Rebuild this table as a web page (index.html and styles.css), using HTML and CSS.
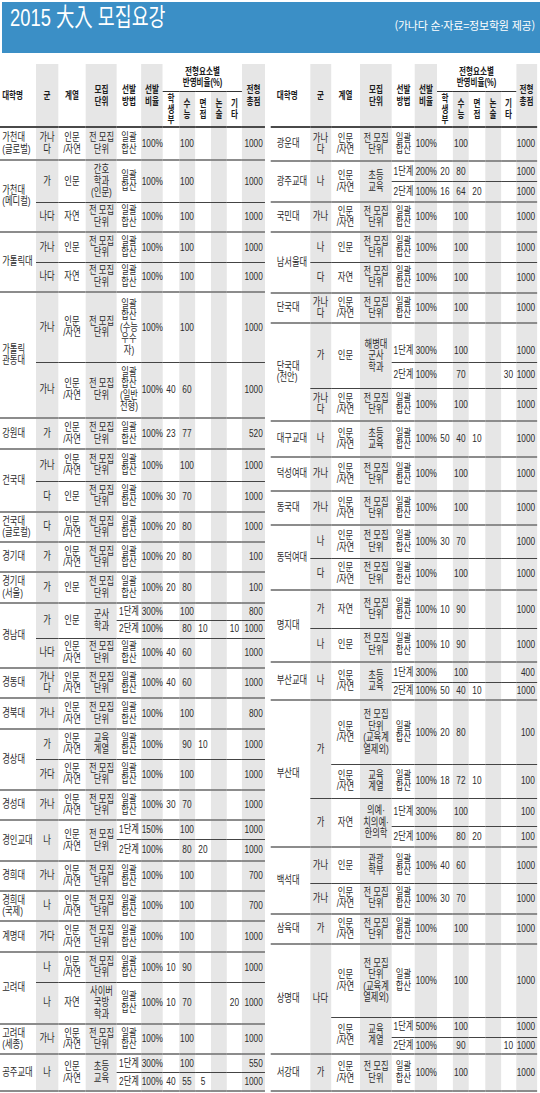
FILE: index.html
```html
<!DOCTYPE html>
<html lang="ko">
<head>
<meta charset="utf-8">
<title>2015 大入 모집요강</title>
<link rel="stylesheet" href="styles.css">
</head>
<body>
<header class="banner">
  <h1 class="title">2015 大入 모집요강</h1>
  <p class="source">(가나다 순·자료=정보학원 제공)</p>
</header>
<main class="board">
<div class="sheets">
  <table class="grid left">
    <colgroup>
      <col class="c1"><col class="c2 sh"><col class="c3"><col class="c4 sh"><col class="c5"><col class="c6 sh"><col class="c7"><col class="c8 sh"><col class="c9"><col class="c10 sh"><col class="c11"><col class="c12 sh">
    </colgroup>
    <thead>
      <tr class="top">
        <th rowspan="2" class="name">대학명</th><th rowspan="2">군</th><th rowspan="2">계열</th><th rowspan="2">모집<br>단위</th><th rowspan="2">선발<br>방법</th><th rowspan="2">선발<br>비율</th><th colspan="5" class="span">전형요소별<br>반영비율(%)</th><th rowspan="2">전형<br>총점</th>
      </tr>
      <tr class="sub">
        <th class="v">학<br>생<br>부</th><th class="v">수<br>능</th><th class="v">면<br>접</th><th class="v">논<br>술</th><th class="v">기<br>타</th>
      </tr>
    </thead>
    <tbody>
      <tr class="u h33"><td>가천대<br>(글로벌)</td><td>가나<br>다</td><td>인문<br>/자연</td><td>전 모집<br>단위</td><td>일괄<br>합산</td><td>100%</td><td></td><td>100</td><td></td><td></td><td></td><td>1000</td></tr>

      <tr class="u h42"><td rowspan="2">가천대<br>(메디컬)</td><td>가</td><td>인문</td><td>간호<br>학과<br>(인문)</td><td>일괄<br>합산</td><td>100%</td><td></td><td>100</td><td></td><td></td><td></td><td>1000</td></tr>
      <tr><td>나다</td><td>자연</td><td>전 모집<br>단위</td><td>일괄<br>합산</td><td>100%</td><td></td><td>100</td><td></td><td></td><td></td><td>1000</td></tr>

      <tr class="u"><td rowspan="2">가톨릭대</td><td>가나</td><td>인문</td><td>전 모집<br>단위</td><td>일괄<br>합산</td><td>100%</td><td></td><td>100</td><td></td><td></td><td></td><td>1000</td></tr>
      <tr><td>나다</td><td>자연</td><td>전 모집<br>단위</td><td>일괄<br>합산</td><td>100%</td><td></td><td>100</td><td></td><td></td><td></td><td>1000</td></tr>

      <tr class="u h70"><td rowspan="2">가톨릭<br>관동대</td><td>가나</td><td>인문<br>/자연</td><td>전 모집<br>단위</td><td>일괄<br>합산<br>(수능<br>우수<br>자)</td><td>100%</td><td></td><td>100</td><td></td><td></td><td></td><td>1000</td></tr>
      <tr class="h56"><td>가나</td><td>인문<br>/자연</td><td>전 모집<br>단위</td><td>일괄<br>합산<br>(일반<br>전형)</td><td>100%</td><td>40</td><td>60</td><td></td><td></td><td></td><td>1000</td></tr>

      <tr class="u h31"><td>강원대</td><td>가</td><td>인문<br>/자연</td><td>전 모집<br>단위</td><td>일괄<br>합산</td><td>100%</td><td>23</td><td>77</td><td></td><td></td><td></td><td>520</td></tr>

      <tr class="u h32"><td rowspan="2">건국대</td><td>가나</td><td>인문<br>/자연</td><td>전 모집<br>단위</td><td>일괄<br>합산</td><td>100%</td><td></td><td>100</td><td></td><td></td><td></td><td>1000</td></tr>
      <tr class="h31"><td>다</td><td>인문</td><td>전 모집<br>단위</td><td>일괄<br>합산</td><td>100%</td><td>30</td><td>70</td><td></td><td></td><td></td><td>1000</td></tr>

      <tr class="u"><td>건국대<br>(글로컬)</td><td>다</td><td>인문<br>/자연</td><td>전 모집<br>단위</td><td>일괄<br>합산</td><td>100%</td><td>20</td><td>80</td><td></td><td></td><td></td><td>1000</td></tr>

      <tr class="u"><td>경기대</td><td>가</td><td>인문<br>/자연</td><td>전 모집<br>단위</td><td>일괄<br>합산</td><td>100%</td><td>20</td><td>80</td><td></td><td></td><td></td><td>100</td></tr>

      <tr class="u h31"><td>경기대<br>(서울)</td><td>가</td><td>인문</td><td>전 모집<br>단위</td><td>일괄<br>합산</td><td>100%</td><td>20</td><td>80</td><td></td><td></td><td></td><td>100</td></tr>

      <tr class="u step h16"><td rowspan="3">경남대</td><td rowspan="2">가</td><td rowspan="2">인문</td><td rowspan="2">군사<br>학과</td><td>1단계</td><td>300%</td><td></td><td>100</td><td></td><td></td><td></td><td>800</td></tr>
      <tr class="step"><td>2단계</td><td>100%</td><td></td><td>80</td><td>10</td><td></td><td>10</td><td>1000</td></tr>
      <tr><td>나다</td><td>인문<br>/자연</td><td>전 모집<br>단위</td><td>일괄<br>합산</td><td>100%</td><td>40</td><td>60</td><td></td><td></td><td></td><td>1000</td></tr>

      <tr class="u"><td>경동대</td><td>가나<br>다</td><td>인문<br>/자연</td><td>전 모집<br>단위</td><td>일괄<br>합산</td><td>100%</td><td>40</td><td>60</td><td></td><td></td><td></td><td>1000</td></tr>

      <tr class="u h31"><td>경북대</td><td>가나</td><td>인문<br>/자연</td><td>전 모집<br>단위</td><td>일괄<br>합산</td><td>100%</td><td></td><td>100</td><td></td><td></td><td></td><td>800</td></tr>

      <tr class="u"><td rowspan="2">경상대</td><td>가</td><td>인문<br>/자연</td><td>교육<br>계열</td><td>일괄<br>합산</td><td>100%</td><td></td><td>90</td><td>10</td><td></td><td></td><td>1000</td></tr>
      <tr class="h31"><td>가다</td><td>인문<br>/자연</td><td>전 모집<br>단위</td><td>일괄<br>합산</td><td>100%</td><td></td><td>100</td><td></td><td></td><td></td><td>1000</td></tr>

      <tr class="u"><td>경성대</td><td>가나</td><td>인문<br>/자연</td><td>전 모집<br>단위</td><td>일괄<br>합산</td><td>100%</td><td>30</td><td>70</td><td></td><td></td><td></td><td>1000</td></tr>

      <tr class="u h19"><td rowspan="2">경인교대</td><td rowspan="2">나</td><td rowspan="2">인문<br>/자연</td><td rowspan="2">전 모집<br>단위</td><td>1단계</td><td>150%</td><td></td><td>100</td><td></td><td></td><td></td><td>1000</td></tr>
      <tr class="h22"><td>2단계</td><td>100%</td><td></td><td>80</td><td>20</td><td></td><td></td><td>1000</td></tr>

      <tr class="u"><td>경희대</td><td>가나</td><td>인문<br>/자연</td><td>전 모집<br>단위</td><td>일괄<br>합산</td><td>100%</td><td></td><td>100</td><td></td><td></td><td></td><td>700</td></tr>

      <tr class="u"><td>경희대<br>(국제)</td><td>나</td><td>인문<br>/자연</td><td>전 모집<br>단위</td><td>일괄<br>합산</td><td>100%</td><td></td><td>100</td><td></td><td></td><td></td><td>700</td></tr>

      <tr class="u h31"><td>계명대</td><td>가다</td><td>인문<br>/자연</td><td>전 모집<br>단위</td><td>일괄<br>합산</td><td>100%</td><td></td><td>100</td><td></td><td></td><td></td><td>1000</td></tr>

      <tr class="u"><td rowspan="2">고려대</td><td>나</td><td>인문<br>/자연</td><td>전 모집<br>단위</td><td>일괄<br>합산</td><td>100%</td><td>10</td><td>90</td><td></td><td></td><td></td><td>1000</td></tr>
      <tr class="h42"><td>나</td><td>자연</td><td>사이버<br>국방<br>학과</td><td>일괄<br>합산</td><td>100%</td><td>10</td><td>70</td><td></td><td></td><td>20</td><td>1000</td></tr>

      <tr class="u"><td>고려대<br>(세종)</td><td>가나</td><td>인문<br>/자연</td><td>전 모집<br>단위</td><td>일괄<br>합산</td><td>100%</td><td></td><td>100</td><td></td><td></td><td></td><td>1000</td></tr>

      <tr class="u step"><td rowspan="2">공주교대</td><td rowspan="2">나</td><td rowspan="2">인문<br>/자연</td><td rowspan="2">초등<br>교육</td><td>1단계</td><td>300%</td><td></td><td>100</td><td></td><td></td><td></td><td>550</td></tr>
      <tr class="h19"><td>2단계</td><td>100%</td><td>40</td><td>55</td><td>5</td><td></td><td></td><td>1000</td></tr>
    </tbody>
  </table>

  <table class="grid right">
    <colgroup>
      <col class="c1"><col class="c2 sh"><col class="c3"><col class="c4 sh"><col class="c5"><col class="c6 sh"><col class="c7"><col class="c8 sh"><col class="c9"><col class="c10 sh"><col class="c11"><col class="c12 sh">
    </colgroup>
    <thead>
      <tr class="top">
        <th rowspan="2" class="name">대학명</th><th rowspan="2">군</th><th rowspan="2">계열</th><th rowspan="2">모집<br>단위</th><th rowspan="2">선발<br>방법</th><th rowspan="2">선발<br>비율</th><th colspan="5" class="span">전형요소별<br>반영비율(%)</th><th rowspan="2">전형<br>총점</th>
      </tr>
      <tr class="sub">
        <th class="v">학<br>생<br>부</th><th class="v">수<br>능</th><th class="v">면<br>접</th><th class="v">논<br>술</th><th class="v">기<br>타</th>
      </tr>
    </thead>
    <tbody>
      <tr class="u h34"><td>광운대</td><td>가나<br>다</td><td>인문<br>/자연</td><td>전 모집<br>단위</td><td>일괄<br>합산</td><td>100%</td><td></td><td>100</td><td></td><td></td><td></td><td>1000</td></tr>

      <tr class="u h20"><td rowspan="2">광주교대</td><td rowspan="2">나</td><td rowspan="2">인문<br>/자연</td><td rowspan="2">초등<br>교육</td><td>1단계</td><td>200%</td><td>20</td><td>80</td><td></td><td></td><td></td><td>1000</td></tr>
      <tr class="h21"><td>2단계</td><td>100%</td><td>16</td><td>64</td><td>20</td><td></td><td></td><td>1000</td></tr>

      <tr class="u"><td>국민대</td><td>가나</td><td>인문<br>/자연</td><td>전 모집<br>단위</td><td>일괄<br>합산</td><td>100%</td><td></td><td>100</td><td></td><td></td><td></td><td>1000</td></tr>

      <tr class="u"><td rowspan="2">남서울대</td><td>나</td><td>인문</td><td>전 모집<br>단위</td><td>일괄<br>합산</td><td>100%</td><td></td><td>100</td><td></td><td></td><td></td><td>1000</td></tr>
      <tr class="h31"><td>다</td><td>자연</td><td>전 모집<br>단위</td><td>일괄<br>합산</td><td>100%</td><td></td><td>100</td><td></td><td></td><td></td><td>1000</td></tr>

      <tr class="u"><td>단국대</td><td>가나<br>다</td><td>인문<br>/자연</td><td>전 모집<br>단위</td><td>일괄<br>합산</td><td>100%</td><td></td><td>100</td><td></td><td></td><td></td><td>1000</td></tr>

      <tr class="u h39 low"><td rowspan="3">단국대<br>(천안)</td><td rowspan="2">가</td><td rowspan="2">인문</td><td rowspan="2">해병대<br>군사<br>학과</td><td>1단계</td><td>300%</td><td></td><td>100</td><td></td><td></td><td></td><td>1000</td></tr>
      <tr class="h26"><td>2단계</td><td>100%</td><td></td><td>70</td><td></td><td></td><td>30</td><td>1000</td></tr>
      <tr class="h33"><td>가나<br>다</td><td>인문<br>/자연</td><td>전 모집<br>단위</td><td>일괄<br>합산</td><td>100%</td><td></td><td>100</td><td></td><td></td><td></td><td>1000</td></tr>

      <tr class="u h36"><td>대구교대</td><td>나</td><td>인문<br>/자연</td><td>초등<br>교육</td><td>일괄<br>합산</td><td>100%</td><td>50</td><td>40</td><td>10</td><td></td><td></td><td>1000</td></tr>

      <tr class="u h34"><td>덕성여대</td><td>가나</td><td>인문<br>/자연</td><td>전 모집<br>단위</td><td>일괄<br>합산</td><td>100%</td><td></td><td>100</td><td></td><td></td><td></td><td>1000</td></tr>

      <tr class="u h34"><td>동국대</td><td>가나</td><td>인문<br>/자연</td><td>전 모집<br>단위</td><td>일괄<br>합산</td><td>100%</td><td></td><td>100</td><td></td><td></td><td></td><td>1000</td></tr>

      <tr class="u h33"><td rowspan="2">동덕여대</td><td>나</td><td>인문<br>/자연</td><td>전 모집<br>단위</td><td>일괄<br>합산</td><td>100%</td><td>30</td><td>70</td><td></td><td></td><td></td><td>1000</td></tr>
      <tr class="h32"><td>다</td><td>인문<br>/자연</td><td>전 모집<br>단위</td><td>일괄<br>합산</td><td>100%</td><td></td><td>100</td><td></td><td></td><td></td><td>1000</td></tr>

      <tr class="u h38"><td rowspan="2">명지대</td><td>가</td><td>자연</td><td>전 모집<br>단위</td><td>일괄<br>합산</td><td>100%</td><td>10</td><td>90</td><td></td><td></td><td></td><td>1000</td></tr>
      <tr class="h34"><td>나</td><td>인문</td><td>전 모집<br>단위</td><td>일괄<br>합산</td><td>100%</td><td>10</td><td>90</td><td></td><td></td><td></td><td>1000</td></tr>

      <tr class="u h20"><td rowspan="2">부산교대</td><td rowspan="2">나</td><td rowspan="2">인문<br>/자연</td><td rowspan="2">초등<br>교육</td><td>1단계</td><td>300%</td><td></td><td>100</td><td></td><td></td><td></td><td>400</td></tr>
      <tr class="step"><td>2단계</td><td>100%</td><td>50</td><td>40</td><td>10</td><td></td><td></td><td>1000</td></tr>

      <tr class="u h64"><td rowspan="4">부산대</td><td rowspan="2">가</td><td>인문<br>/자연</td><td>전 모집<br>단위<br>(교육계<br>열제외)</td><td>일괄<br>합산</td><td>100%</td><td>20</td><td>80</td><td></td><td></td><td></td><td>100</td></tr>
      <tr class="h34"><td>인문<br>/자연</td><td>교육<br>계열</td><td>일괄<br>합산</td><td>100%</td><td>18</td><td>72</td><td>10</td><td></td><td></td><td>100</td></tr>
      <tr class="h28"><td rowspan="2">가</td><td rowspan="2">자연</td><td rowspan="2">의예·<br>치의예·<br>한의학</td><td>1단계</td><td>300%</td><td></td><td>100</td><td></td><td></td><td></td><td>100</td></tr>
      <tr class="h21"><td>2단계</td><td>100%</td><td></td><td>80</td><td>20</td><td></td><td></td><td>100</td></tr>

      <tr class="u h36"><td rowspan="2">백석대</td><td>가나</td><td>인문</td><td>관광<br>학부</td><td>일괄<br>합산</td><td>100%</td><td>40</td><td>60</td><td></td><td></td><td></td><td>1000</td></tr>
      <tr class="h31"><td>가나</td><td>인문<br>/자연</td><td>전 모집<br>단위</td><td>일괄<br>합산</td><td>100%</td><td>30</td><td>70</td><td></td><td></td><td></td><td>1000</td></tr>

      <tr class="u"><td>삼육대</td><td>가</td><td>인문<br>/자연</td><td>전 모집<br>단위</td><td>일괄<br>합산</td><td>100%</td><td></td><td>100</td><td></td><td></td><td></td><td>1000</td></tr>

      <tr class="u h73"><td rowspan="3">상명대</td><td rowspan="3">나다</td><td>인문<br>/자연</td><td>전 모집<br>단위<br>(교육계<br>열제외)</td><td>일괄<br>합산</td><td>100%</td><td></td><td>100</td><td></td><td></td><td></td><td>1000</td></tr>
      <tr class="h20"><td rowspan="2">인문<br>/자연</td><td rowspan="2">교육<br>계열</td><td>1단계</td><td>500%</td><td></td><td>100</td><td></td><td></td><td></td><td>1000</td></tr>
      <tr class="step h16"><td>2단계</td><td>100%</td><td></td><td>90</td><td></td><td></td><td>10</td><td>1000</td></tr>

      <tr class="u h37"><td>서강대</td><td>가</td><td>인문<br>/자연</td><td>전 모집<br>단위</td><td>일괄<br>합산</td><td>100%</td><td></td><td>100</td><td></td><td></td><td></td><td>1000</td></tr>
    </tbody>
  </table>
</div>
</main>
</body>
</html>
```
FILE: styles.css
```css
:root {
  --s: 0.72;
  --blue: #3b8fc6;
  --shade: #e6e6e6;
  --unit-line: #8c8c8c;
  --sub-line: #444444;
}

* { box-sizing: border-box; }

html, body {
  margin: 0;
  padding: 0;
  background: #ffffff;
}

body {
  width: 540px;
  overflow: hidden;
  font-family: "Liberation Sans Narrow", "Liberation Sans", "Noto Sans CJK KR", sans-serif;
  color: #2b2b2b;
}

/* ---------- banner ---------- */
.banner {
  display: flex;
  justify-content: space-between;
  align-items: flex-start;
  height: 51px;
  margin: 2px 0 0 2px;
  padding: 3px 5px 0 8px;
  background: var(--blue);
  color: #ffffff;
}

.title {
  display: inline-block;
  margin: 0;
  font-size: 24.5px;
  line-height: 26px;
  font-weight: 400;
  white-space: nowrap;
  transform: scaleX(0.75);
  transform-origin: left center;
}

.source {
  margin: 13px 0 0;
  font-family: "Noto Sans CJK KR", sans-serif;
  font-size: 11px;
  line-height: 14px;
  letter-spacing: -0.2px;
  white-space: nowrap;
}

/* ---------- tables (condensed type) ---------- */
.board {
  display: block;
  width: 538px;
  margin-top: 11px;
  overflow: hidden;
}

.sheets {
  display: flex;
  align-items: flex-start;
  gap: calc(6px / var(--s));
  width: calc(537px / var(--s));
  transform: scaleX(var(--s));
  transform-origin: left top;
}

.grid {
  flex: none;
  border-collapse: collapse;
  table-layout: fixed;
  font-size: 11.5px;
  line-height: 11.5px;
}

.grid.left { width: calc(265px / var(--s)); }
.grid.right { width: calc(266px / var(--s)); }

.grid col.sh { background: var(--shade); }

.left .c1 { width: calc(36px / var(--s)); }
.left .c2 { width: calc(22px / var(--s)); }
.left .c3 { width: calc(28px / var(--s)); }
.left .c4 { width: calc(31px / var(--s)); }
.left .c5 { width: calc(24px / var(--s)); }
.left .c6 { width: calc(22px / var(--s)); }
.left .c7, .left .c8, .left .c9, .left .c10 { width: calc(16px / var(--s)); }
.left .c11 { width: calc(15px / var(--s)); }
.left .c12 { width: calc(23px / var(--s)); }

.right .c1 { width: calc(39px / var(--s)); }
.right .c2 { width: calc(21px / var(--s)); }
.right .c3 { width: calc(29px / var(--s)); }
.right .c4 { width: calc(32px / var(--s)); }
.right .c5 { width: calc(23px / var(--s)); }
.right .c6 { width: calc(22px / var(--s)); }
.right .c7, .right .c8, .right .c9, .right .c10 { width: calc(16px / var(--s)); }
.right .c11 { width: calc(15px / var(--s)); }
.right .c12 { width: calc(21px / var(--s)); }

/* header */
.grid th {
  padding: 0 1px;
  font-size: 10.5px;
  line-height: 12px;
  font-weight: 700;
  color: #1c1c1c;
  text-align: center;
  vertical-align: middle;
  white-space: nowrap;
  border-bottom: 2px solid #4a4a4a;
}

.grid thead tr.top { height: 27px; }
.grid thead tr.sub { height: 36px; }

.grid th.span {
  background: #ffffff;
  line-height: 11.5px;
  border-bottom: 1px solid #333333;
}

.grid th.v { line-height: 10.5px; }

.grid th.name {
  text-align: left;
  padding-left: 3px;
}
.right th.name { padding-left: 8px; }

/* body */
.grid tbody { border-bottom: 2px solid var(--unit-line); }

.grid tbody tr { height: 30px; }

.grid td {
  padding: 2px 1px;
  text-align: center;
  vertical-align: middle;
  white-space: nowrap;
  border-top: 1px solid var(--sub-line);
}

.grid tr.u td { border-top: 2px solid var(--unit-line); }

.grid tr.u > td:first-child {
  text-align: left;
  padding-left: 3px;
}
.right tr.u > td:first-child { padding-left: 8px; }

.grid td:last-child {
  text-align: right;
  padding-right: 3px;
}

.grid tr.low > td:not([rowspan]) {
  vertical-align: bottom;
  padding-bottom: 5px;
}

/* row heights */
.grid tr.step { height: 18px; }
.grid tr.h16 { height: 16px; }
.grid tr.h19 { height: 19px; }
.grid tr.h20 { height: 20px; }
.grid tr.h21 { height: 21px; }
.grid tr.h22 { height: 22px; }
.grid tr.h26 { height: 26px; }
.grid tr.h28 { height: 28px; }
.grid tr.h31 { height: 31px; }
.grid tr.h32 { height: 32px; }
.grid tr.h33 { height: 33px; }
.grid tr.h34 { height: 34px; }
.grid tr.h36 { height: 36px; }
.grid tr.h37 { height: 37px; }
.grid tr.h38 { height: 38px; }
.grid tr.h39 { height: 39px; }
.grid tr.h42 { height: 42px; }
.grid tr.h56 { height: 56px; }
.grid tr.h64 { height: 64px; }
.grid tr.h70 { height: 70px; }
.grid tr.h73 { height: 73px; }
```
